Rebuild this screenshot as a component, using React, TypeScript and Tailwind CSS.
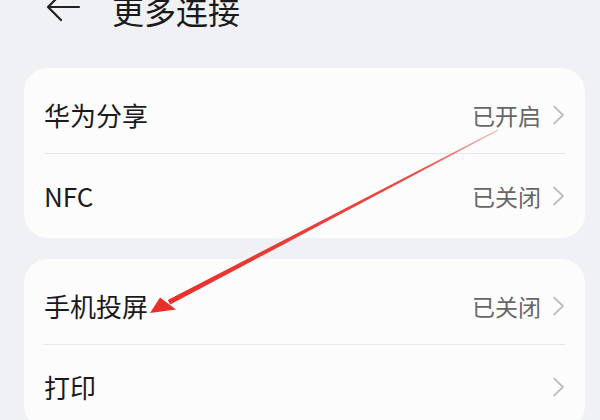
import React from "react";

type Row = { label: string; value?: string };

const groups: Row[][] = [
  [
    { label: "华为分享", value: "已开启" },
    { label: "NFC", value: "已关闭" },
  ],
  [
    { label: "手机投屏", value: "已关闭" },
    { label: "打印" },
  ],
];

const font = { fontFamily: '"Noto Sans CJK SC", "Noto Sans", sans-serif' };

const Chevron: React.FC = () => (
  <svg width="13" height="20" viewBox="0 0 13 20" className="shrink-0">
    <path d="M2 1.5 L11 10 L2 18.5" fill="none" stroke="#bdbdbd" strokeWidth="1.8" strokeLinecap="round" strokeLinejoin="round" />
  </svg>
);

const SettingRow: React.FC<{ row: Row; first: boolean }> = ({ row, first }) => (
  <div className={first ? "flex h-[85px] items-center justify-between pt-[9px]" : "flex h-[84px] items-center justify-between"}>
    <span className="text-[26px] leading-none text-[#1a1a1a]">{row.label}</span>
    <div className="flex items-center gap-[11px]">
      {row.value && <span className="text-[23px] leading-none text-[#666666]">{row.value}</span>}
      <Chevron />
    </div>
  </div>
);

export default function App() {
  return (
    <div className="relative h-[420px] w-[600px] overflow-hidden bg-[#f0f1f4]" style={font}>
      {/* header, cut at the top */}
      <div className="h-[68px]">
        <div className="flex h-[20px] items-center pl-[46px]">
          <svg width="34" height="34" viewBox="0 0 34 34" className="-mt-[6px] shrink-0 overflow-visible">
            <path d="M33 17 H2 M15 4 L2 17 L15 30" fill="none" stroke="#222" strokeWidth="2.2" strokeLinecap="round" strokeLinejoin="round" />
          </svg>
          <span className="ml-[32px] text-[32px] leading-[20px] text-[#1a1a1a]">更多连接</span>
        </div>
      </div>

      <div className="flex flex-col gap-[21px] pl-[24px] pr-[15px]">
        {groups.map((g, gi) => (
          <div key={gi} className="rounded-[24px] bg-[#fcfcfc] px-[20px]">
            {g.map((row, ri) => (
              <React.Fragment key={row.label}>
                {ri > 0 && <div className="h-px bg-[#e6e6e6]" />}
                <SettingRow row={row} first={ri === 0} />
              </React.Fragment>
            ))}
          </div>
        ))}
      </div>

      {/* red annotation arrow */}
      <svg className="pointer-events-none absolute left-0 top-0" width="600" height="420" viewBox="0 0 600 420">
        <defs>
          <linearGradient id="arr" x1="498" y1="130" x2="170" y2="302" gradientUnits="userSpaceOnUse">
            <stop offset="0" stopColor="#f4b3b3" />
            <stop offset="0.25" stopColor="#ea4a45" />
            <stop offset="1" stopColor="#e8302b" />
          </linearGradient>
        </defs>
        <polygon points="498.2,130.4 497.8,129.6 167.8,300 170.2,304.6" fill="url(#arr)" />
        <polygon points="150,313 160,297.5 176,309.5" fill="#e8302b" />
      </svg>
    </div>
  );
}
